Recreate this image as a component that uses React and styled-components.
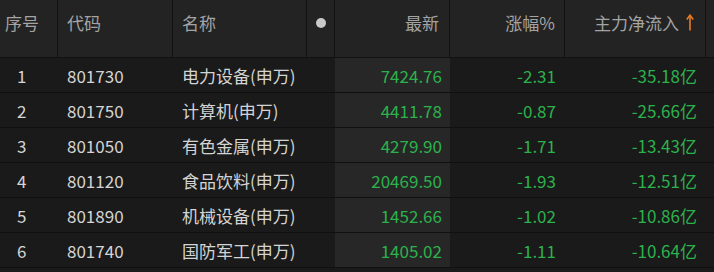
import React from 'react';
import styled, { createGlobalStyle } from 'styled-components';

const rows = [
  { no: 1, code: '801730', name: '电力设备(申万)', price: '7424.76', pct: '-2.31', flow: '-35.18亿' },
  { no: 2, code: '801750', name: '计算机(申万)', price: '4411.78', pct: '-0.87', flow: '-25.66亿' },
  { no: 3, code: '801050', name: '有色金属(申万)', price: '4279.90', pct: '-1.71', flow: '-13.43亿' },
  { no: 4, code: '801120', name: '食品饮料(申万)', price: '20469.50', pct: '-1.93', flow: '-12.51亿' },
  { no: 5, code: '801890', name: '机械设备(申万)', price: '1452.66', pct: '-1.02', flow: '-10.86亿' },
  { no: 6, code: '801740', name: '国防军工(申万)', price: '1405.02', pct: '-1.11', flow: '-10.64亿' },
];

const GlobalStyle = createGlobalStyle`
  body {
    margin: 0;
    background: #1a1a1a;
    font-family: "Noto Sans CJK SC", "Noto Sans", sans-serif;
  }
`;

const COLS = '58px 115px 134px 28px 115px 115px 141px 1fr';

const Table = styled.div`
  width: 714px;
  height: 272px;
  overflow: hidden;
  background: #1a1a1a;
  font-size: 17px;
`;

const HeaderRow = styled.div`
  display: grid;
  grid-template-columns: ${COLS};
  height: 57px;
  background: #232323;
  border-bottom: 1px solid #111;
`;

const HeadCell = styled.div`
  display: flex;
  align-items: center;
  justify-content: ${(p) => (p.$right ? 'flex-end' : 'flex-start')};
  gap: 7px;
  padding: 0 ${(p) => p.$pr || 0}px 12px ${(p) => p.$pl || 0}px;
  border-right: ${(p) => (p.$last ? 'none' : '1px solid #111')};
  color: #a4a4a4;
  white-space: nowrap;
`;

const Dot = styled.span`
  width: 10px;
  height: 10px;
  border-radius: 50%;
  background: #c9c9c9;
  margin: 0 auto;
`;

const Row = styled.div`
  display: grid;
  grid-template-columns: ${COLS};
  height: 34px;
  border-bottom: 1px solid #101010;
`;

const Cell = styled.div`
  display: flex;
  align-items: center;
  justify-content: ${(p) => (p.$right ? 'flex-end' : 'flex-start')};
  padding: 0 ${(p) => p.$pr || 0}px 0 ${(p) => p.$pl || 0}px;
  color: ${(p) => (p.$green ? '#2cb24c' : '#d4d4d4')};
  background: ${(p) => (p.$hl ? '#272727' : 'transparent')};
  white-space: nowrap;
`;

const SortArrow = () => (
  <svg width="8" height="17" viewBox="0 0 8 17">
    <path d="M4 1.5 V16.5" stroke="#e87b25" strokeWidth="1.6" fill="none" />
    <path d="M0.8 5.5 L4 1.2 L7.2 5.5" stroke="#e87b25" strokeWidth="1.6" fill="none" />
  </svg>
);

export default function App() {
  return (
    <>
      <GlobalStyle />
      <Table>
        <HeaderRow>
          <HeadCell $pl={5}>序号</HeadCell>
          <HeadCell $pl={9}>代码</HeadCell>
          <HeadCell $pl={9}>名称</HeadCell>
          <HeadCell>
            <Dot />
          </HeadCell>
          <HeadCell $right $pr={10}>最新</HeadCell>
          <HeadCell $right $pr={9}>涨幅%</HeadCell>
          <HeadCell $right $pr={11}>
            主力净流入
            <SortArrow />
          </HeadCell>
          <HeadCell $last />
        </HeaderRow>
        {rows.map((r) => (
          <Row key={r.no}>
            <Cell $pl={17}>{r.no}</Cell>
            <Cell $pl={9}>{r.code}</Cell>
            <Cell $pl={9}>{r.name}</Cell>
            <Cell />
            <Cell $right $hl $green $pr={8}>{r.price}</Cell>
            <Cell $right $green $pr={9}>{r.pct}</Cell>
            <Cell $right $green $pr={9}>{r.flow}</Cell>
            <Cell />
          </Row>
        ))}
      </Table>
    </>
  );
}
